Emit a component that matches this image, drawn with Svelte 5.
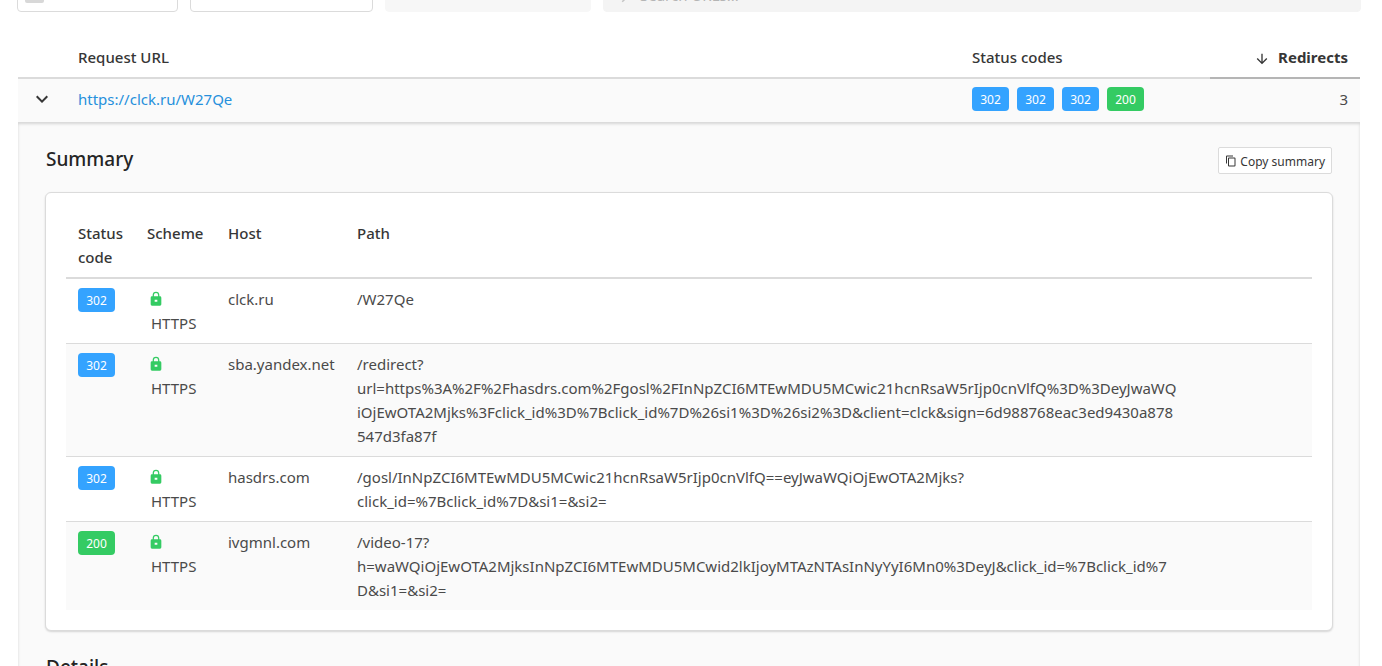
<script>
  const hops = [
    { code: 302, host: 'clck.ru', path: ['/W27Qe'] },
    {
      code: 302,
      host: 'sba.yandex.net',
      path: [
        '/redirect?',
        'url=https%3A%2F%2Fhasdrs.com%2Fgosl%2FInNpZCI6MTEwMDU5MCwic21hcnRsaW5rIjp0cnVlfQ%3D%3DeyJwaWQ',
        'iOjEwOTA2Mjks%3Fclick_id%3D%7Bclick_id%7D%26si1%3D%26si2%3D&client=clck&sign=6d988768eac3ed9430a878',
        '547d3fa87f'
      ]
    },
    {
      code: 302,
      host: 'hasdrs.com',
      path: [
        '/gosl/InNpZCI6MTEwMDU5MCwic21hcnRsaW5rIjp0cnVlfQ==eyJwaWQiOjEwOTA2Mjks?',
        'click_id=%7Bclick_id%7D&si1=&si2='
      ]
    },
    {
      code: 200,
      host: 'ivgmnl.com',
      path: [
        '/video-17?',
        'h=waWQiOjEwOTA2MjksInNpZCI6MTEwMDU5MCwid2lkIjoyMTAzNTAsInNyYyI6Mn0%3DeyJ&click_id=%7Bclick_id%7',
        'D&si1=&si2='
      ]
    }
  ];
</script>

<main>
  <div class="toolbar">
    <label class="box toggle"><input type="checkbox" aria-label="Toggle" /></label>
    <select class="box picker" aria-label="Options"><option></option></select>
    <button class="box action" aria-label="Action" disabled></button>
    <div class="box search">
      <svg viewBox="0 0 24 24" width="18" height="18"><path d="M9.5 3a6.5 6.5 0 1 0 0 13 6.5 6.5 0 0 0 0-13M14.500 14.500 21 21" transform="matrix(-1 0 0 1 24 0)" /></svg>
      <input type="search" placeholder="Search URLs..." aria-label="Search URLs" />
    </div>
  </div>

  <table class="results">
    <thead>
      <tr>
        <th class="toggle-col"></th>
        <th>Request URL</th>
        <th class="codes-col">Status codes</th>
        <th class="count-col sorted">
          <svg viewBox="0 0 24 24" width="16" height="16"><path d="M11 4h2v12l5.500-5.500 1.420 1.420L12 19.840l-7.920-7.920L5.500 10.500 11 16V4Z" /></svg>
          <span>Redirects</span>
        </th>
      </tr>
    </thead>
    <tbody>
      <tr class="request">
        <td>
          <button class="chevron" aria-expanded="true" aria-label="Details">
            <svg viewBox="0 0 24 24" width="24" height="24"><path d="M7.410 8.580 12 13.170l4.590-4.590L18 10l-6 6-6-6 1.410-1.420Z" /></svg>
          </button>
        </td>
        <td><a href="https://clck.ru/W27Qe">https://clck.ru/W27Qe</a></td>
        <td>
          <div class="tags">
            {#each hops as hop}
              <span class="tag" class:ok={hop.code === 200}>{hop.code}</span>
            {/each}
          </div>
        </td>
        <td class="count">3</td>
      </tr>
      <tr>
        <td class="detail" colspan="4">
          <div class="heading">
            <h2>Summary</h2>
            <button class="copy">
              <svg viewBox="0 0 24 24" width="12" height="12"><path d="M19 21H8V7h11m0-2H8a2 2 0 0 0-2 2v14a2 2 0 0 0 2 2h11a2 2 0 0 0 2-2V7a2 2 0 0 0-2-2m-3-4H4a2 2 0 0 0-2 2v14h2V3h12V1Z" /></svg>
              <span>Copy summary</span>
            </button>
          </div>

          <section class="card">
            <table class="hops">
              <thead>
                <tr>
                  <th class="code-col">Status code</th>
                  <th class="scheme-col">Scheme</th>
                  <th class="host-col">Host</th>
                  <th>Path</th>
                </tr>
              </thead>
              <tbody>
                {#each hops as hop}
                  <tr>
                    <td class="code"><span class="tag" class:ok={hop.code === 200}>{hop.code}</span></td>
                    <td>
                      <div class="scheme">
                        <svg viewBox="0 0 24 24" width="18" height="16"><path fill-rule="evenodd" d="M12 1a5 5 0 0 1 5 5v2h1a2 2 0 0 1 2 2v10a2 2 0 0 1-2 2H6a2 2 0 0 1-2-2V10a2 2 0 0 1 2-2h1V6a5 5 0 0 1 5-5m0 1.900A3.100 3.100 0 0 0 8.900 6v2h6.200V6A3.100 3.100 0 0 0 12 2.900M10 13v3h4v-3Z" /></svg>
                        <span>HTTPS</span>
                      </div>
                    </td>
                    <td>{hop.host}</td>
                    <td>
                      {#each hop.path as part, i}{#if i > 0}<br />{/if}{part}{/each}
                    </td>
                  </tr>
                {/each}
              </tbody>
            </table>
          </section>

          <h2 class="next">Details</h2>
        </td>
      </tr>
    </tbody>
  </table>
</main>

<style>
  :global(body) {
    background: #fff;
  }

  main {
    color: #4a4a4a;
    font: 15px/24px 'Noto Sans', 'Open Sans', sans-serif;
    height: 100vh;
    overflow: hidden;
    padding: 0 22px 0 18px;
  }

  main,
  main * {
    box-sizing: border-box;
  }

  svg {
    display: block;
    flex: none;
    fill: currentColor;
  }

  .toolbar {
    display: flex;
    align-items: flex-end;
    gap: 12px;
    height: 12px;
    margin: 0 -1px;
    overflow: hidden;
  }

  .box {
    flex: none;
    height: 34px;
    margin: 0;
    border: 1px solid #dbdbdb;
    border-radius: 4px;
    background: #fff;
    font: inherit;
  }

  .toggle {
    display: flex;
    align-items: center;
    width: 161px;
    padding: 0 7px;
  }

  .toggle input {
    appearance: none;
    width: 19px;
    height: 16px;
    margin: 0;
    border-radius: 2px;
    background: #d8d8d8;
  }

  .picker {
    appearance: none;
    width: 183px;
  }

  .action {
    width: 206px;
    border-color: #f7f7f7;
    background: #f7f7f7;
  }

  .search {
    display: flex;
    align-items: center;
    flex: 1;
    gap: 2px;
    padding: 0 16px;
    border-color: #f4f4f4;
    background: #f4f4f4;
  }

  .search svg {
    fill: none;
    stroke: #c4c4c4;
    stroke-width: 2;
  }

  .search input {
    flex: 1;
    min-width: 0;
    padding: 0;
    border: 0;
    background: none;
    font: inherit;
  }

  .search input::placeholder {
    color: #b5b5b5;
  }

  table {
    width: 100%;
    border-collapse: separate;
    border-spacing: 0;
    table-layout: fixed;
  }

  th,
  td {
    padding: 8px 12px;
    text-align: left;
    vertical-align: top;
  }

  th {
    border-bottom: 2px solid #dbdbdb;
    color: #363636;
    font-weight: 500;
  }

  .results {
    margin-top: 25px;
  }

  .toggle-col {
    width: 48px;
  }

  .codes-col {
    width: 250px;
  }

  .count-col {
    width: 150px;
  }

  .sorted {
    border-color: #b5b5b5;
    font-weight: 700;
    text-align: right;
    white-space: nowrap;
  }

  .sorted svg {
    display: inline-block;
    margin-right: 4px;
    vertical-align: middle;
  }

  .request td {
    height: 44px;
    border-bottom: 1px solid #dbdbdb;
    background: #fafafa;
  }

  .chevron {
    display: block;
    padding: 0;
    border: 0;
    background: none;
    color: #363636;
  }

  a {
    color: #2690dc;
    text-decoration: none;
  }

  .tags {
    display: flex;
    gap: 8px;
  }

  .tag {
    display: block;
    width: 37px;
    height: 24px;
    border-radius: 4px;
    background: #34a3ff;
    color: #fff;
    font-size: 12px;
    line-height: 26px;
    text-align: center;
  }

  .ok {
    background: #34cb63;
  }

  .hops .code {
    padding-top: 9px;
    padding-bottom: 7px;
  }

  .request .count {
    text-align: right;
  }

  .detail {
    padding: 24px 27px;
    background: #fafafa;
    box-shadow: inset 0 1px 3px #0a0a0a26;
  }

  .heading {
    display: flex;
    align-items: flex-start;
    justify-content: space-between;
    height: 45px;
    padding: 0 1px;
  }

  h2 {
    margin: 0;
    color: #242424;
    font-size: 19px;
    font-weight: 500;
  }

  .copy {
    display: flex;
    align-items: center;
    gap: 3px;
    height: 27px;
    padding: 0 6px;
    border: 1px solid #dbdbdb;
    border-radius: 2px;
    background: #fff;
    color: #363636;
    font: 12px/24px 'Noto Sans', 'Open Sans', sans-serif;
  }

  .copy span {
    padding-top: 2px;
  }

  .card {
    padding: 20px;
    border: 1px solid #dbdbdb;
    border-radius: 6px;
    background: #fff;
    box-shadow: 0 1px 2px #0a0a0a26;
  }

  .code-col {
    width: 69px;
  }

  .scheme-col {
    width: 81px;
  }

  .host-col {
    width: 129px;
  }

  .hops td {
    border-bottom: 1px solid #dbdbdb;
    white-space: nowrap;
  }

  .hops tbody tr:last-child td {
    border-bottom: 0;
  }

  .hops tbody tr:nth-child(even) {
    background: #fafafa;
  }

  .scheme svg {
    height: 24px;
    padding: 4px 0;
    color: #34cb63;
  }

  .scheme span {
    display: block;
    padding-left: 4px;
  }

  .next {
    margin-top: 24px;
    padding: 0 1px;
  }
</style>
